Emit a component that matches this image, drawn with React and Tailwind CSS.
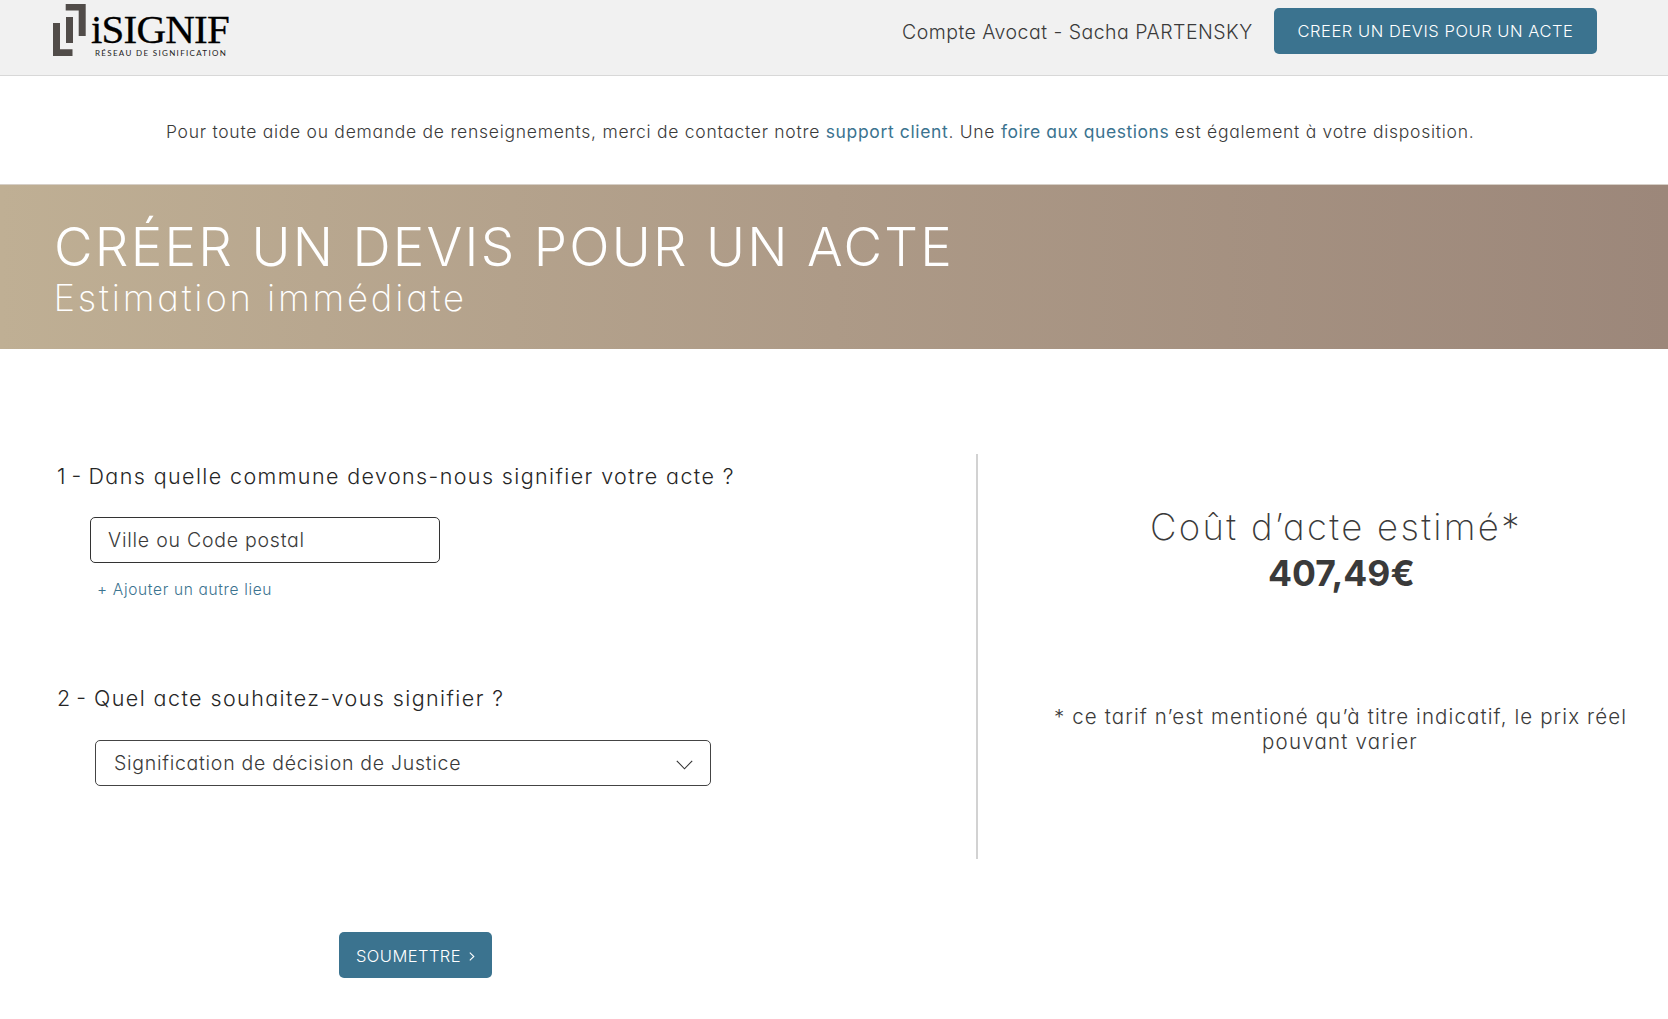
import React from "react";

function LogoMark() {
  return (
    <svg className="mt-1 h-[52px] w-[33px] shrink-0" viewBox="0 0 33 52" fill="#514c49" aria-hidden="true">
      <path d="M12.7 0H32.7V32H25.7V6.5H12.7Z" />
      <path d="M13 13H20V39H13Z" />
      <path d="M0 19H7V45.2H19.5V52H0Z" />
    </svg>
  );
}

function Logo() {
  return (
    <a href="#" className="ml-[53px] flex text-black" aria-label="iSIGNIF">
      <LogoMark />
      <span className="ml-[5px] flex flex-col whitespace-nowrap">
        <span className="mt-[9px] font-['Liberation_Serif',serif] text-[41px] leading-[40px] font-normal tracking-[-0.8px] [-webkit-text-stroke:0.3px_#000]">iSIGNIF</span>
        <span className="ml-1 mt-[-1px] font-['Lato',sans-serif] text-[8px] leading-[10px] font-normal tracking-[1.32px] text-[#222]">RÉSEAU DE SIGNIFICATION</span>
      </span>
    </a>
  );
}

function Header() {
  return (
    <header className="flex h-[76px] items-start border-b border-[#d8d8d8] bg-[#f1f1f1]">
      <Logo />
      <div className="ml-auto mr-[71px] flex w-[696px] items-start whitespace-nowrap">
        <span className="ml-px mt-[22px] text-[19.5px] leading-5 tracking-[0.48px]">Compte Avocat - Sacha PARTENSKY</span>
        <button className="ml-auto mt-2 flex h-[46px] w-[323px] items-center rounded-[5px] bg-[#3b738f] pl-[23.5px] text-[16.5px] leading-5 tracking-[0.55px] text-white">
          CREER UN DEVIS POUR UN ACTE
        </button>
      </div>
    </header>
  );
}

function Field({ label, number, children }) {
  return (
    <div>
      <h2 className="flex text-[21.5px] leading-6 text-[#262626]">
        {number}
        {label}
      </h2>
      {children}
    </div>
  );
}

export default function App() {
  return (
    <div className="h-[1019px] overflow-hidden bg-white font-['Inter',sans-serif] font-light text-[#3a3a3a] [font-feature-settings:'cv11']">
      <Header />

      <p className="mt-[45px] pl-[166px] whitespace-nowrap text-[17.5px] leading-[22px] tracking-[0.73px]">
        Pour toute aide ou demande de renseignements, merci de contacter notre{" "}
        <a href="#" className="font-normal tracking-[0.64px] text-[#3b738f]">support client</a>
        . Une{" "}
        <a href="#" className="font-normal tracking-[0.53px] text-[#3b738f]">foire aux questions</a>{" "}
        est également à votre disposition.
      </p>

      <section className="mt-[41px] h-[165px] border-t border-[#d6cfc7] bg-linear-to-r from-[#bfaf94] via-[#ad9a87] to-[#9c877a] pt-[32px] text-white">
        <h1 className="pl-[54px] whitespace-nowrap text-[53px] leading-[60px] tracking-[2.27px]">CRÉER UN DEVIS POUR UN ACTE</h1>
        <p className="pl-[53.5px] whitespace-nowrap text-[36.5px] leading-[43px] font-extralight tracking-[2.82px]">Estimation immédiate</p>
      </section>

      <main className="flex whitespace-nowrap">
        <form className="w-[976px] pl-[57px] pt-[115px]">
          <Field
            number={<span className="w-[31.5px]">1 -</span>}
            label={<span className="tracking-[1.39px]">Dans quelle commune devons-nous signifier votre acte ?</span>}
          >
            <div className="ml-[33px] mt-[29px] flex h-[46px] w-[350px] items-center rounded-[5px] border border-[#333] pl-[17px] pt-0.5 text-[19.5px] tracking-[0.76px]">
              Ville ou Code postal
            </div>
            <a href="#" className="ml-[40px] mt-4 block pt-px text-[15.5px] leading-5 tracking-[0.66px] text-[#3b738f]">
              + Ajouter un autre lieu
            </a>
          </Field>
          <div className="mt-[86px]">
            <Field
              number={<span className="w-[37px]">2 -</span>}
              label={<span className="tracking-[1.42px]">Quel acte souhaitez-vous signifier ?</span>}
            >
              <div className="ml-[38px] mt-[30px] flex h-[46px] w-[616px] items-center rounded-[5px] border border-[#444] pl-[18px] pt-px text-[19.5px] tracking-[0.72px]">
                Signification de décision de Justice
                <svg className="ml-auto mr-[17px] mt-0.5 h-[10px] w-[17px]" viewBox="0 0 17 10" fill="none" stroke="#333" strokeWidth="1.1">
                  <path d="M.8.8 8.5 8.8 16.2.8" />
                </svg>
              </div>
            </Field>
          </div>
          <button type="button" className="ml-[282px] mt-[146px] flex h-[46px] w-[153px] items-center rounded-[5px] bg-[#3b738f] pl-[17px] pt-0.5 text-[16.5px] tracking-[0.44px] text-white">
            SOUMETTRE
            <svg className="ml-auto mr-[17px] h-[9px] w-[6px]" viewBox="0 0 6 9" fill="none" stroke="#fff" strokeWidth="1.1">
              <path d="M.8.6 4.8 4.5.8 8.4" />
            </svg>
          </button>
        </form>

        <aside className="mt-[105px] h-[405px] border-l-2 border-[#d2d2d2] pt-[50px]">
          <p className="pl-[172px] text-[36.5px] leading-[46px] font-extralight tracking-[2.32px]">
            Coût d’acte estimé*
          </p>
          <p className="mt-px pl-[290px] text-[35.5px] leading-[46px] font-bold">407,49€</p>
          <p className="mt-[107px] pl-[76px] text-[20.5px] leading-[25px] tracking-[1.11px]">
            * ce tarif n’est mentioné qu’à titre indicatif, le prix réel
            <br />
            <span className="ml-[208px] tracking-[1.22px]">pouvant varier</span>
          </p>
        </aside>
      </main>
    </div>
  );
}
